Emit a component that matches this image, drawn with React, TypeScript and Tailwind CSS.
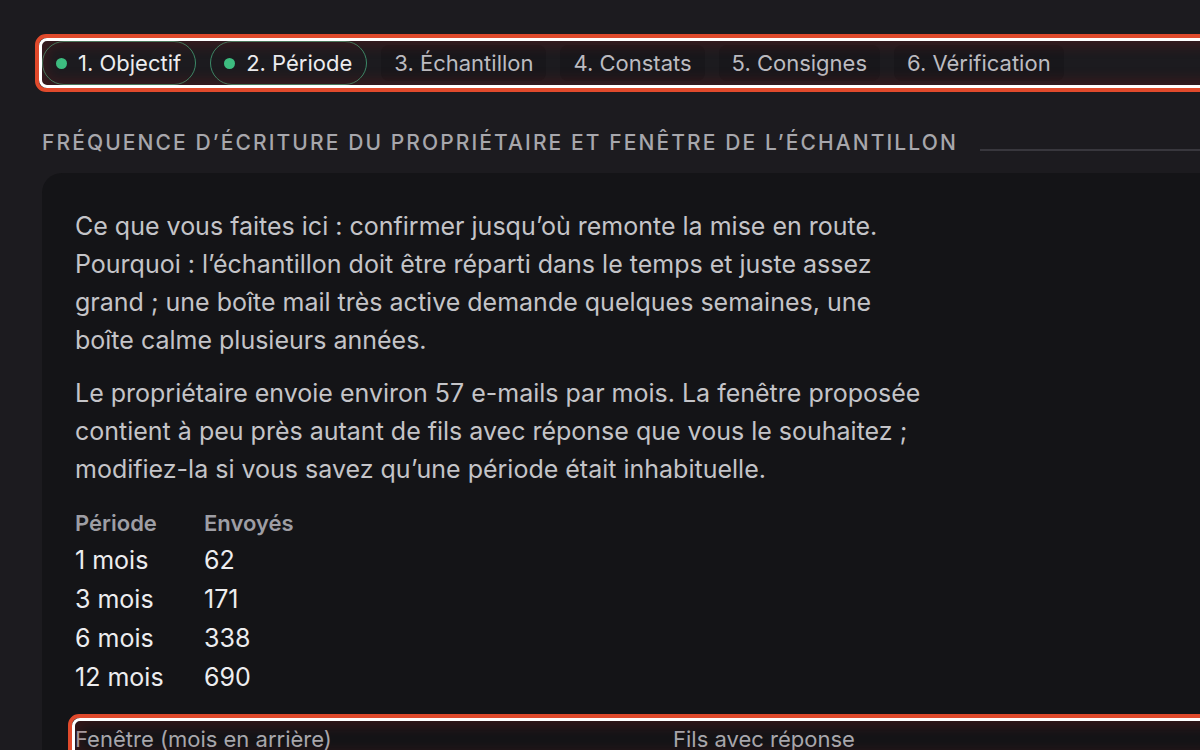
import React from "react";

const steps = [
  { label: "1. Objectif", done: true },
  { label: "2. Période", done: true },
  { label: "3. Échantillon", done: false },
  { label: "4. Constats", done: false },
  { label: "5. Consignes", done: false },
  { label: "6. Vérification", done: false },
];

const rows = [
  ["1 mois", "62"],
  ["3 mois", "171"],
  ["6 mois", "338"],
  ["12 mois", "690"],
];

// red + white outline drawn around a highlighted element
function Highlight() {
  return (
    <div className="pointer-events-none absolute -inset-[7px] rounded-[11px] border-4 border-[#e04a2c]">
      <div className="h-full w-full rounded-[8px] border-[3px] border-white shadow-[inset_0_0_14px_4px_rgba(150,30,30,0.28)]" />
    </div>
  );
}

export default function App() {
  return (
    <div
      className="h-[750px] w-full overflow-hidden bg-[#1c1b1f]"
      style={{ fontFamily: "Inter, 'Noto Sans', sans-serif" }}
    >
      <div className="w-[1320px] px-[42px] pt-[41px]">
        {/* STEPS */}
        <div className="relative">
          <div className="flex h-[44px] items-center gap-[14px]">
            {steps.map((s) =>
              s.done ? (
                <div
                  key={s.label}
                  className="flex h-[44px] items-center gap-[11px] rounded-full border border-[#3b8a68] pl-[13px] pr-[14px] text-[22px] text-[#ededef]"
                >
                  <span className="h-[11px] w-[11px] rounded-full bg-[#3dbd80]" />
                  {s.label}
                </div>
              ) : (
                <div
                  key={s.label}
                  className="flex h-[36px] items-center rounded-[8px] bg-[#18171b] px-[13px] text-[22px] text-[#bcbcc1]"
                >
                  {s.label}
                </div>
              )
            )}
          </div>
          <Highlight />
        </div>

        {/* SECTION TITLE */}
        <div className="mt-[43px] flex items-center gap-[22px]">
          <h2 className="whitespace-nowrap text-[21px] font-medium uppercase leading-[30px] tracking-[0.1em] text-[#a7a7ac]">
            Fréquence d’écriture du propriétaire et fenêtre de l’échantillon
          </h2>
          <div className="mt-[14px] h-[2px] flex-1 bg-[#38373d]" />
        </div>

        {/* CARD */}
        <div className="mt-[15px] rounded-[20px] bg-[#141417] px-[33px] pt-[34px] pb-10">
          <div className="max-w-[852px] text-[25px] leading-[38px] text-[#c4c4c8]">
            <p>
              Ce que vous faites ici : confirmer jusqu’où remonte la mise en route. Pourquoi :
              l’échantillon doit être réparti dans le temps et juste assez grand ; une boîte mail
              très active demande quelques semaines, une boîte calme plusieurs années.
            </p>
            <p className="mt-[15px]">
              Le propriétaire envoie environ 57 e-mails par mois. La fenêtre proposée contient à peu
              près autant de fils avec réponse que vous le souhaitez ; modifiez-la si vous savez
              qu’une période était inhabituelle.
            </p>
          </div>

          <table className="mt-[17px] text-[25px]">
            <thead>
              <tr className="text-left text-[22px] leading-[36px] text-[#9e9ea4]">
                <th className="w-[129px] font-semibold">Période</th>
                <th className="font-semibold">Envoyés</th>
              </tr>
            </thead>
            <tbody className="text-[#ededef]">
              {rows.map(([p, n]) => (
                <tr key={p} className="leading-[39px]">
                  <td>{p}</td>
                  <td>{n}</td>
                </tr>
              ))}
            </tbody>
          </table>

          <div className="relative mt-[24px]">
            <div className="grid grid-cols-[598px_1fr] text-[22px] leading-[36px] text-[#a9a9ae]">
              <span>Fenêtre (mois en arrière)</span>
              <span>Fils avec réponse</span>
            </div>
            <Highlight />
          </div>
        </div>
      </div>
    </div>
  );
}
